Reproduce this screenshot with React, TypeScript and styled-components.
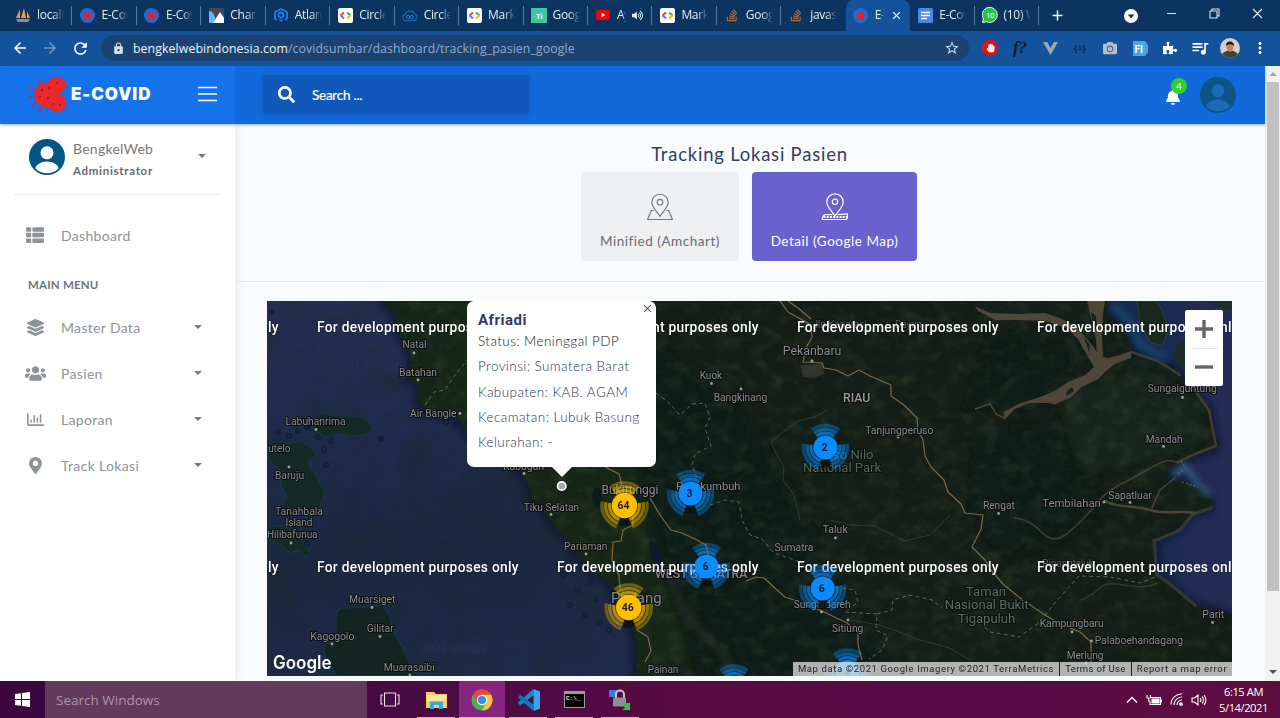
import React from "react";
import styled, { createGlobalStyle, css } from "styled-components";
import {
  FaSearch,
  FaBell,
  FaThList,
  FaLayerGroup,
  FaUsers,
  FaRegChartBar,
  FaMapMarkerAlt,
  FaPuzzlePiece,
  FaCamera,
  FaHandPaper,
  FaVolumeUp,
  FaStackOverflow,
} from "react-icons/fa";
import { MdLock, MdRefresh, MdArrowBack, MdArrowForward, MdStarBorder, MdQueueMusic, MdMoreVert, MdAdd, MdClose } from "react-icons/md";

const UI = `"Open Sans", "Noto Sans", sans-serif`;
const LATO = `Lato, sans-serif`;
const ROBOTO = `Roboto, sans-serif`;

const Global = createGlobalStyle`
  *, *::before, *::after { box-sizing: border-box; }
  body { margin: 0; overflow: hidden; background: #f9fbfd; }
  svg { display: block; flex: none; }
`;

const Desktop = styled.div`
  width: 1280px;
  height: 718px;
  display: flex;
  flex-direction: column;
  overflow: hidden;
  font-family: ${UI};
`;

/* ---------- browser chrome ---------- */

const TabStrip = styled.div`
  height: 31px;
  flex: none;
  display: flex;
  align-items: stretch;
  padding-left: 8px;
  background: #0b3560;
`;

const Tab = styled.div<{ $active?: boolean; $divider?: boolean }>`
  position: relative;
  width: 64.45px;
  flex: none;
  display: flex;
  align-items: center;
  padding: 0 7px 1px 7px;
  gap: 6px;
  color: #e4edf6;
  font-size: 12px;
  letter-spacing: -0.3px;
  ${(p) =>
    p.$active &&
    css`
      background: #14539b;
      border-radius: 8px 8px 0 0;
    `}
  ${(p) =>
    p.$divider &&
    css`
      &::after {
        content: "";
        position: absolute;
        right: 0;
        top: 6px;
        width: 1px;
        height: 19px;
        background: #5c7897;
      }
    `}
`;

const TabTitle = styled.span<{ $short?: boolean }>`
  width: ${(p) => (p.$short ? "9px" : "27px")};
  overflow: hidden;
  white-space: nowrap;
  line-height: 18px;
  mask-image: linear-gradient(to right, #000 60%, transparent);
`;

const Favicon = styled.span`
  width: 16px;
  height: 16px;
  flex: none;
  display: grid;
  place-items: center;
`;

const WindowBar = styled.div`
  flex: 1;
  display: flex;
  align-items: center;
  color: #fff;
`;

const WinSlot = styled.div<{ $w: number }>`
  width: ${(p) => p.$w}px;
  flex: none;
  height: 29px;
  display: grid;
  place-items: center;
`;

const WinButtons = styled.div`
  margin-left: -19px;
  height: 25px;
`;

const Toolbar = styled.div`
  height: 35px;
  flex: none;
  display: flex;
  align-items: center;
  padding-bottom: 1px;
  background: #14539b;
  color: #fff;
`;

const NavButtons = styled.div`
  width: 101px;
  display: flex;
  align-items: center;
  gap: 12px;
  padding-left: 11px;
`;

const Omnibox = styled.div`
  width: 868px;
  height: 26px;
  border-radius: 13px;
  background: #1a4372;
  display: flex;
  align-items: center;
  padding: 0 9px 0 11px;
  gap: 8px;
  font-size: 12.3px;
  color: #f0f5fa;
`;

const Url = styled.span`
  flex: 1;
  white-space: nowrap;
  letter-spacing: 0.095px;
  em {
    font-style: normal;
    color: #93aac5;
  }
`;

const Extensions = styled.div`
  flex: 1;
  display: flex;
  align-items: center;
  padding-left: 6px;
`;

const Ext = styled.div`
  width: 30px;
  height: 30px;
  display: grid;
  place-items: center;
`;

const FontExt = styled.span`
  font: italic bold 17px/20px "Liberation Serif", serif;
  color: #10192b;
`;

const BraceExt = styled.span`
  font: bold 9px/12px ${UI};
  color: #122444;
`;

/* ---------- page ---------- */

const Viewport = styled.div`
  height: 615px;
  flex: none;
  display: flex;
  background: #f9fbfd;
`;

const Page = styled.div`
  width: 1265px;
  display: flex;
  flex-direction: column;
  font-family: ${LATO};
`;

const Header = styled.header`
  height: 58px;
  flex: none;
  display: flex;
  background: #1269db;
  box-shadow: 0 1px 3px rgba(20, 90, 150, 0.45);
  z-index: 1;
`;

const Brand = styled.div`
  width: 235px;
  display: flex;
  align-items: center;
  padding: 0 18px 2px 28px;
  background: #1572e8;
`;

const BrandName = styled.span`
  flex: 1;
  color: #fff;
  font: 900 17px/24px Inter, sans-serif;
  letter-spacing: 0.85px;
`;

const SearchBox = styled.div`
  width: 266px;
  height: 39px;
  margin: 9px 0 0 28px;
  border-radius: 4px;
  background: #1059bb;
  box-shadow: 0 1px 5px rgba(10, 60, 140, 0.35);
  color: #fff;
  display: flex;
  align-items: center;
  gap: 17px;
  padding: 0 0 1px 15px;
  font-size: 13.5px;
  letter-spacing: -0.25px;
  -webkit-text-stroke: 0.2px #fff;
`;

const SearchText = styled.span`
  padding-top: 2px;
`;

const HeaderRight = styled.div`
  flex: 1;
  display: flex;
  justify-content: flex-end;
  align-items: center;
  gap: 19px;
  padding-right: 29px;
`;

const BellWrap = styled.div`
  position: relative;
  color: #fff;
  padding-top: 3px;
`;

const Badge = styled.span`
  position: absolute;
  left: 6px;
  top: -8px;
  width: 16px;
  height: 16px;
  border-radius: 50%;
  background: #31ce36;
  color: #fff;
  font-size: 10px;
  line-height: 16px;
  text-align: center;
`;

const Body = styled.div`
  flex: 1;
  min-height: 0;
  display: flex;
`;

const Sidebar = styled.aside`
  width: 235px;
  flex: none;
  background: #fff;
  box-shadow: 2px 0 9px rgba(60, 70, 100, 0.09);
`;

const Profile = styled.div`
  height: 71px;
  margin: 0 15px 0 14px;
  border-bottom: 1px solid #e9eaec;
  display: flex;
  padding: 15px 14px 0 15px;
  gap: 8px;
`;

const ProfileText = styled.div`
  flex: 1;
  color: #777;
  font-size: 14px;
  line-height: 22px;
  letter-spacing: 0.25px;
  margin-top: -1px;
  strong {
    display: block;
    font-size: 11.5px;
    color: #666a6c;
    letter-spacing: 0.7px;
  }
`;

const Caret = styled.i`
  margin-top: 15px;
  width: 0;
  height: 0;
  border: 4px solid transparent;
  border-top-color: #777a7d;
  border-bottom: 0;
`;

const NavItem = styled.div<{ $first?: boolean }>`
  height: 46px;
  display: flex;
  align-items: center;
  margin-top: ${(p) => (p.$first ? "18px" : "0")};
  padding: 0 33px 2px 25px;
  color: #8d9498;
  ${Caret} {
    margin-top: 0;
  }
`;

const NavIcon = styled.span`
  width: 20px;
  display: grid;
  place-items: center;
  margin-right: 16px;
`;

const NavLabel = styled.span`
  flex: 1;
  font-size: 14px;
  letter-spacing: 0.33px;
  padding-top: 1px;
`;

const SectionTitle = styled.h4`
  margin: 0;
  padding: 18px 0 12px 28px;
  font-size: 11.5px;
  line-height: 16px;
  letter-spacing: 0.2px;
  color: #6f7477;
`;

const Main = styled.main`
  flex: 1;
  min-width: 0;
  display: flex;
  flex-direction: column;
`;

const Intro = styled.section`
  height: 158px;
  flex: none;
  border-bottom: 1px solid #e6e9ec;
  display: flex;
  flex-direction: column;
  align-items: center;
  padding: 18px 2px 0 0;
`;

const Title = styled.h1`
  margin: 0 0 6px 1px;
  font-size: 18.5px;
  font-weight: 400;
  line-height: 24px;
  letter-spacing: 0.77px;
  color: #373c62;
`;

const Choices = styled.div`
  display: flex;
  gap: 13px;
`;

const Choice = styled.button<{ $primary?: boolean }>`
  width: ${(p) => (p.$primary ? "165px" : "158px")};
  height: 89px;
  border: 0;
  padding: 20px 0 0;
  border-radius: 4px;
  background: ${(p) => (p.$primary ? "#6861ce" : "#eff0f1")};
  color: ${(p) => (p.$primary ? "#fff" : "#686d72")};
  display: flex;
  flex-direction: column;
  align-items: center;
  gap: 9px;
  font: 400 13.5px/22px Lato, sans-serif;
  letter-spacing: 0.53px;
`;

const MapFrame = styled.div`
  position: relative;
  width: 965px;
  height: 375px;
  margin: 19px 0 0 32px;
  overflow: hidden;
  background: #1d2745;
  font-family: ${ROBOTO};
`;

const InfoWindow = styled.div`
  position: absolute;
  left: 200px;
  top: 0;
  width: 189px;
  height: 166px;
  border-radius: 7px;
  background: #fff;
  padding: 9px 0 0 11px;
  &::after {
    content: "";
    position: absolute;
    left: 84px;
    top: 165px;
    border: 11px solid transparent;
    border-top: 11px solid #fff;
    border-bottom: 0;
  }
`;

const InfoClose = styled.span`
  position: absolute;
  right: 2px;
  top: 1px;
  color: #555;
`;

const InfoName = styled.div`
  font: 700 15px/20px ${ROBOTO};
  letter-spacing: 0.5px;
  color: #343a66;
`;

const InfoLine = styled.div<{ $dark?: boolean }>`
  font: 300 13.5px/25.3px Lato, sans-serif;
  letter-spacing: 0.42px;
  white-space: nowrap;
  color: ${(p) => (p.$dark ? "#15161c" : "#2b3152")};
  margin-top: ${(p) => (p.$dark ? "-1px" : "0")};
`;

const ZoomControl = styled.div`
  position: absolute;
  right: 9px;
  top: 9px;
  width: 38px;
  height: 76px;
  border-radius: 2px;
  background: #fff;
  display: flex;
  flex-direction: column;
  align-items: center;
`;

const ZoomButton = styled.div`
  width: 27px;
  flex: 1;
  display: grid;
  place-items: center;
  & + & {
    border-top: 1px solid #e6e6e6;
  }
`;

const Attribution = styled.div`
  position: absolute;
  right: 0;
  bottom: 0;
  width: 439px;
  height: 14px;
  display: flex;
  background: rgba(225, 228, 226, 0.76);
  font: 400 9.5px/14px ${ROBOTO};
  color: #222;
  span {
    text-align: center;
    white-space: nowrap;
  }
  span + span {
    border-left: 1px solid #222;
  }
  span:nth-child(1) { width: 266px; letter-spacing: 0.61px; }
  span:nth-child(2) { width: 72px; letter-spacing: 0.35px; }
  span:nth-child(3) { width: 101px; letter-spacing: 0.62px; }
`;

const Scrollbar = styled.div`
  width: 15px;
  background: #f1f1f1;
  display: flex;
  flex-direction: column;
  align-items: center;
  justify-content: space-between;
  padding: 6px 0 7px;
`;

const Arrow = styled.i<{ $up?: boolean }>`
  border: 4px solid transparent;
  ${(p) => (p.$up ? "border-bottom-color: #a3a3a3; border-top: 0;" : "border-top-color: #505050; border-bottom: 0;")}
`;

const Thumb = styled.div`
  width: 12px;
  height: 509px;
  margin: 6px 0 auto 1px;
  background: #c1c1c1;
`;

/* ---------- taskbar ---------- */

const Taskbar = styled.footer`
  height: 37px;
  flex: none;
  display: flex;
  background: linear-gradient(90deg, #3f073f 0%, #490a42 30%, #570c42 55%, #560b46 75%, #5e0c3f 100%);
  color: #fff;
`;

const Start = styled.div`
  width: 45px;
  display: grid;
  place-items: center;
  background: #3c063f;
`;

const TaskSearch = styled.div`
  width: 322px;
  background: #623a5e;
  color: #ae94ac;
  font-size: 13.5px;
  line-height: 39px;
  padding-left: 11px;
`;

const TaskButton = styled.div<{ $open?: boolean; $active?: boolean }>`
  width: 46px;
  flex: none;
  display: grid;
  place-items: center;
  background: ${(p) => (p.$active ? "#86257f" : "transparent")};
  background-image: ${(p) => (p.$open ? "linear-gradient(#e8a3e0, #e8a3e0)" : "none")};
  background-repeat: no-repeat;
  background-size: ${(p) => (p.$active ? "100% 1px" : "38px 1px")};
  background-position: center bottom;
`;

const Tray = styled.div`
  margin-left: auto;
  display: flex;
  align-items: center;
  gap: 8px;
`;

const Clock = styled.div`
  width: 57px;
  margin-right: 8px;
  font-size: 11.2px;
  line-height: 16px;
  letter-spacing: -0.45px;
  text-align: center;
`;

/* ---------- small drawings ---------- */

const VirusIcon = ({ size = 15 }: { size?: number }) => (
  <svg width={size} height={size} viewBox="0 0 16 16">
    <circle cx="8" cy="8" r="8" fill="#2468cf" />
    <path d="M3.500 7.500 6 5l5-.8 1 1.600L10 8l2.500 2.400-.8 1.700-5-.5L3.500 9.700Z" fill="#e3202c" />
  </svg>
);

const Brackets = () => (
  <svg width="15" height="15" viewBox="0 0 15 15">
    <rect width="15" height="15" rx="2" fill="#fff" />
    <g fill="none" strokeWidth="2">
      <path d="M6 4.500 2.500 7.500" stroke="#ea4335" />
      <path d="M2.500 7.300 6 10.500" stroke="#4285f4" />
      <path d="M9 4.500 12.500 7.500" stroke="#34a853" />
      <path d="M12.500 7.300 9 10.500" stroke="#fbbc05" />
    </g>
  </svg>
);

const favicons: Record<string, React.ReactNode> = {
  pma: (
    <svg width="16" height="15" viewBox="0 0 16 15">
      <path d="M5 1 1 10h4ZM9 0 6 10h5ZM12 3v7h3Z" fill="#f29b38" />
      <path d="M1 11h14l-2 3H3Z" fill="#8b8f94" />
    </svg>
  ),
  virus: <VirusIcon />,
  am: (
    <svg width="15" height="15" viewBox="0 0 15 15">
      <rect width="15" height="15" rx="1" fill="#474758" />
      <path d="M0 3c4 0 6 4 7 12H0Z" fill="#67b7f0" />
      <path d="M4 15 11 4l4 6v5Z" fill="#fff" />
    </svg>
  ),
  atlantis: (
    <svg width="14" height="15" viewBox="0 0 14 15">
      <path d="M3 12 1 10.500V4l6-3 6 3v6.500L11 12" fill="none" stroke="#1f7af0" strokeWidth="1.800" />
      <circle cx="7" cy="7" r="2.500" fill="none" stroke="#1f7af0" strokeWidth="1.800" />
      <path d="M4.500 11.500 7 14l2.500-2.500" fill="#1f7af0" />
    </svg>
  ),
  code: <Brackets />,
  cloud: (
    <svg width="16" height="14" viewBox="0 0 16 14">
      <path d="M4 12.500a3 3 0 0 1-.6-6 4.700 4.700 0 0 1 9-.6 3.400 3.400 0 0 1-.4 6.600Z" fill="none" stroke="#1a62ad" strokeWidth="1.300" />
      <circle cx="6.200" cy="9" r="1.600" fill="none" stroke="#2a7fd6" />
      <circle cx="9.800" cy="9" r="1.600" fill="none" stroke="#2a7fd6" />
    </svg>
  ),
  ti: (
    <svg width="16" height="15" viewBox="0 0 16 15">
      <rect width="16" height="15" fill="#3fc5a1" />
      <text x="8" y="11" fontSize="8" fontWeight="700" fill="#e6fff7" textAnchor="middle" fontFamily="Roboto, sans-serif">Ti</text>
    </svg>
  ),
  yt: (
    <svg width="14" height="10" viewBox="0 0 15 11">
      <rect width="15" height="11" rx="2.500" fill="#f00" />
      <path d="M6 3v5l4-2.500Z" fill="#fff" />
    </svg>
  ),
  so: <FaStackOverflow size={14} color="#b5703a" />,
  docs: (
    <svg width="15" height="15" viewBox="0 0 15 15">
      <rect width="15" height="15" rx="1.500" fill="#4a86ee" />
      <path d="M3 4.500h9M3 7.500h9M3 10.500h6" stroke="#fff" strokeWidth="1.500" />
    </svg>
  ),
  wa: (
    <svg width="16" height="16" viewBox="0 0 16 16">
      <path d="M.5 15.500 1.400 12A7.500 7.500 0 1 1 4.500 14.700Z" fill="#25c04a" stroke="#e8fff0" strokeWidth="1" />
      <text x="8" y="11" fontSize="8" fill="#fff" textAnchor="middle" fontFamily="Roboto, sans-serif">10</text>
    </svg>
  ),
};

const tabs: { icon: string; title: string; divider?: boolean; active?: boolean; sound?: boolean }[] = [
  { icon: "pma", title: "localhost", divider: true },
  { icon: "virus", title: "E-Covid", divider: true },
  { icon: "virus", title: "E-Covid", divider: true },
  { icon: "am", title: "Charts", divider: true },
  { icon: "atlantis", title: "Atlantis", divider: true },
  { icon: "code", title: "Circles", divider: true },
  { icon: "cloud", title: "Circles", divider: true },
  { icon: "code", title: "Marker", divider: true },
  { icon: "ti", title: "Google", divider: true },
  { icon: "yt", title: "Ay", divider: true, sound: true },
  { icon: "code", title: "Marker", divider: true },
  { icon: "so", title: "Google", divider: true },
  { icon: "so", title: "javascript" },
  { icon: "virus", title: "E-Covid", active: true },
  { icon: "docs", title: "E-Covid", divider: true },
  { icon: "wa", title: "(10) Wh", divider: true },
];

const Avatar = ({ id, color, fill }: { id: string; color: string; fill: string }) => (
  <svg width="36" height="36" viewBox="0 0 36 36">
    <clipPath id={id}>
      <circle cx="18" cy="18" r="16.300" />
    </clipPath>
    <circle cx="18" cy="18" r="18" fill={color} />
    <g clipPath={`url(#${id})`} fill={fill}>
      <circle cx="18" cy="13.800" r="6.500" />
      <ellipse cx="18" cy="31" rx="12" ry="8.500" />
    </g>
  </svg>
);

const BrandVirus = () => (
  <svg width="43" height="42" viewBox="0 0 43 42">
    <g stroke="#b8305a" strokeWidth="1.100">
      <path d="M14 12 11 7M8 18 3 15M7 24H2M9 29 4 32M15 32l-3 5M20 34l-1 4M25 8 23 3M31 5V2M36 8l2-2M38 14h2M36 30l4 1M35 35l3 3M30 37v3" />
    </g>
    <g fill="#c02c4e">
      <circle cx="11" cy="7" r="1.200" /><circle cx="3" cy="15" r="1.200" /><circle cx="2" cy="24" r="1.200" />
      <circle cx="4" cy="32" r="1.200" /><circle cx="12" cy="37" r="1.200" />
    </g>
    <path
      d="M20 9.500C22 5 27 3 32 4.500S39 11 37 15 33 19.500 31 21C33 22.500 36 23 38 27S36 37 31 38.500 23 38 20 34C13 35 6.500 29 6.500 22S12 9 20 9.500Z"
      fill="#e9282b"
    />
    <g fill="#a91a22">
      <circle cx="14" cy="17" r="1.300" /><circle cx="20" cy="25" r="1.300" /><circle cx="12" cy="24" r="1" />
      <circle cx="21" cy="15" r="1" /><circle cx="29" cy="10" r="1.100" /><circle cx="32" cy="32" r="1.100" />
      <circle cx="25" cy="31" r="1" />
    </g>
  </svg>
);

const PinMapIcon = () => (
  <svg width="28" height="29" viewBox="0 0 28 29" fill="none" stroke="#74787c" strokeWidth="1.100">
    <path d="M14 24.500C11 19.500 5.800 15 5.800 10.500a8.200 8.200 0 0 1 16.400 0c0 4.500-5.200 9-8.200 14Z" />
    <circle cx="14" cy="10.200" r="2.800" />
    <path d="M7.500 18.500H5.300L1.500 27.500h25l-3.800-9h-2.200" />
  </svg>
);

const PinRoadIcon = () => (
  <svg width="28" height="29" viewBox="0 0 28 29" fill="none" stroke="#fff" strokeWidth="1.200">
    <path d="M14 24C11 19.500 5.800 14.800 5.800 10a8.200 8.200 0 0 1 16.400 0C22.200 14.800 17 19.500 14 24Z" />
    <circle cx="14" cy="9.800" r="2.700" />
    <path d="M1 27.500 2.500 23.500c1-1 2-.8 3-.8h6M1 27.500h24.500c1-1.500 1-3.500 1-5.500l-10 .7" />
    <path d="M2.500 25h23.500" strokeWidth="2" strokeDasharray="2 1.200" />
  </svg>
);

/* ---------- map ---------- */

type Label = { t: string; x: number; y: number; w: number; s?: number; c?: string; b?: boolean; o?: number };

const labels: Label[] = [
  { t: "Natal", x: 402.5, y: 347.700, w: 24 },
  { t: "Batahan", x: 399, y: 375.700, w: 38 },
  { t: "Air Bangle", x: 410, y: 417, w: 46.500 },
  { t: "Labuhanrima", x: 285.500, y: 424.700, w: 60 },
  { t: "utelo", x: 268, y: 451.500, w: 22.500 },
  { t: "Baruju", x: 275, y: 478.700, w: 29 },
  { t: "Tanahbala", x: 275, y: 515, w: 48 },
  { t: "Island", x: 285.500, y: 525.600, w: 27 },
  { t: "Hilibafunua", x: 267, y: 537.500, w: 50.500 },
  { t: "Muarsiget", x: 349, y: 602.500, w: 46.500 },
  { t: "Gilitar", x: 366.700, y: 631.500, w: 27 },
  { t: "Kagogolo", x: 310.300, y: 640, w: 44 },
  { t: "Muarasaibi", x: 383.700, y: 670.700, w: 51 },
  { t: "Tiku Selatan", x: 523.700, y: 510.700, w: 55.500 },
  { t: "Kabugan", x: 503, y: 470, w: 41 },
  { t: "Pariaman", x: 564, y: 549.800, w: 43.500 },
  { t: "Bukittinggi", x: 601.500, y: 493.500, w: 57, s: 12 },
  { t: "Payakumbuh", x: 676, y: 489.500, w: 64.500, s: 11.500 },
  { t: "Kuok", x: 699.700, y: 379, w: 22.500 },
  { t: "Bangkinang", x: 713.700, y: 400.500, w: 53.500 },
  { t: "Pekanbaru", x: 782.700, y: 355, w: 58.700, s: 12.500 },
  { t: "Jln Kaparasi", x: 812.700, y: 327.700, w: 54, o: 0.6 },
  { t: "Dayun", x: 895, y: 327.700, w: 27, o: 0.6 },
  { t: "RIAU", x: 843, y: 401.700, w: 27.300, s: 12, b: true, c: "#98999a" },
  { t: "Tanjungperuso", x: 865.300, y: 433.500, w: 68 },
  { t: "Teso Nilo", x: 819, y: 458.500, w: 54.500, s: 12.500, c: "#4e6a55" },
  { t: "National Park", x: 803, y: 471.700, w: 78, s: 12.500, c: "#4e6a55" },
  { t: "Sungaiguntung", x: 1147.700, y: 392.300, w: 69 },
  { t: "Mandah", x: 1145.700, y: 442.500, w: 37 },
  { t: "Sapatluar", x: 1108.300, y: 498.500, w: 43.500 },
  { t: "Tembilahan", x: 1042.300, y: 506.500, w: 58.500, s: 11.500 },
  { t: "Rengat", x: 983, y: 508.800, w: 31.700 },
  { t: "Taluk", x: 822.700, y: 533, w: 25 },
  { t: "Sumatra", x: 774.500, y: 551, w: 39 },
  { t: "WEST SUMATRA", x: 655, y: 578, w: 92.500, s: 12, b: true, c: "#84878a" },
  { t: "Padang", x: 611, y: 602.500, w: 50.500, s: 15.500, c: "#8a8a8c" },
  { t: "Sungaidareh", x: 793.700, y: 608.300, w: 57 },
  { t: "Sitiung", x: 832, y: 631.700, w: 31.300 },
  { t: "Painan", x: 647.700, y: 673, w: 30.700 },
  { t: "Taman", x: 966, y: 596, w: 40, s: 12.500, c: "#5a6f60" },
  { t: "Nasional Bukit", x: 944.700, y: 609.200, w: 84, s: 12.500, c: "#5a6f60" },
  { t: "Tigapuluh", x: 957.700, y: 622.500, w: 57.500, s: 12.500, c: "#5a6f60" },
  { t: "Kampungbaru", x: 1039.700, y: 627, w: 64 },
  { t: "Palaboehandagang", x: 1094.700, y: 643.800, w: 88.300 },
  { t: "Merlung", x: 1066.700, y: 659, w: 36.700 },
  { t: "Parit", x: 1202.300, y: 617.700, w: 22 },
  { t: "Pinangteluk", x: 1042.300, y: 566.500, w: 51.500, o: 0.6 },
];

const towns: [number, number][] = [
  [414, 353], [418, 380], [460, 413.500], [316, 429.500], [289, 467], [291, 543], [372, 607.500], [380, 636.500],
  [332, 644], [410, 675], [551, 514.500], [524, 473.500], [586, 554], [711.500, 383.500], [741, 389], [812, 361],
  [898, 437], [1182.500, 397.500], [1163.500, 446.500], [1130, 502.500], [1104, 502], [998.500, 513.500], [835.500, 538],
  [821.500, 612], [848, 620], [1072, 632], [1091.500, 641], [1212.500, 622.500], [1086, 663],
];

const clusters: { x: number; y: number; n: string; warm?: boolean }[] = [
  { x: 624.500, y: 505.500, n: "64", warm: true },
  { x: 690.500, y: 493.500, n: "3" },
  { x: 825.500, y: 447.500, n: "2" },
  { x: 706.500, y: 566.500, n: "6" },
  { x: 628.700, y: 607.500, n: "46", warm: true },
  { x: 822.700, y: 588.500, n: "6" },
  { x: 734, y: 688, n: "3" },
  { x: 847.500, y: 672, n: "4" },
];

const arc = (r: number, from: number, to: number) => {
  const p = (a: number) => `${(r * Math.sin((a * Math.PI) / 180)).toFixed(2)} ${(-r * Math.cos((a * Math.PI) / 180)).toFixed(2)}`;
  return `M${p(from)}A${r} ${r} 0 0 1 ${p(to)}`;
};

const sectors = (r: number) => arc(r, -38, 38) + arc(r, 80, 160) + arc(r, 200, 280);

const Cluster = ({ x, y, n, warm }: { x: number; y: number; n: string; warm?: boolean }) => {
  const color = warm ? "#ffbf00" : "#0a8cff";
  const rings: [number, number][] = warm ? [[15, 0.6], [19, 0.42], [23, 0.22]] : [[14.500, 0.6], [18.200, 0.42], [22, 0.22]];
  return (
    <g transform={`translate(${x} ${y})`} fill="none">
      <path d={sectors(18)} stroke={color} strokeWidth={12} opacity={0.2} />
      {rings.map(([r, o]) => (
        <path key={r} d={sectors(r)} stroke={color} strokeWidth={2.800} opacity={o} />
      ))}
      <path d="M-3 10h6l2 10h-10Z" fill="#0d1210" opacity={0.85} />
      <circle r={warm ? 12.700 : 12} fill={color} />
      <text x="-1" y="3.800" textAnchor="middle" fontSize="10.500" fontWeight="700" fill="#1a1d22">
        {n}
      </text>
    </g>
  );
};

const mainland =
  "M384 301 395 315 400 335 409 345 411 365 408 378 420 387 417 400 427 411 440 415 458 417 472 438 500 458 522 471 529 485 530 498 544 510 552 523 570 541 577 555 590 568 607 580 617 596 619 610 631 625 637 645 637 676H1232V614L1208 609 1190 603 1172 588 1164 580 1157 575 1154 552 1153 540 1168 535 1181 526 1192 514 1210 509 1212 503 1200 489 1180 480 1164 479 1178 463 1195 455 1213 451 1216 447 1209 410 1195 391 1182 382 1178 370 1160 363 1145 356 1131 352 1128 338 1116 320 1104 314 1110 301Z";

const dev = "For development purposes only";

const MapDrawing = () => (
  <svg width="965" height="375" viewBox="267 301 965 375" fontFamily={ROBOTO}>
    <defs>
      <linearGradient id="sea" x1="0" y1="0" x2="0.3" y2="1">
        <stop offset="0" stopColor="#252e52" />
        <stop offset="0.4" stopColor="#202a4b" />
        <stop offset="0.65" stopColor="#1c2741" />
        <stop offset="1" stopColor="#1f2b4a" />
      </linearGradient>
      <linearGradient id="east" x1="0" y1="0" x2="1" y2="0">
        <stop offset="0" stopColor="#14304c" />
        <stop offset="0.5" stopColor="#182a50" />
        <stop offset="0.8" stopColor="#232b55" />
        <stop offset="1" stopColor="#252d55" />
      </linearGradient>
      <filter id="relief" x="0" y="0" width="1" height="1">
        <feTurbulence type="fractalNoise" baseFrequency="0.06 0.08" numOctaves="5" seed="8" />
        <feColorMatrix values="0 0 0 0 0.12  0 0 0 0 0.18  0 0 0 0 0.08  2.2 0 0 0 -0.95" />
      </filter>
      <filter id="shade" x="0" y="0" width="1" height="1">
        <feTurbulence type="fractalNoise" baseFrequency="0.03 0.04" numOctaves="4" seed="3" />
        <feColorMatrix values="0 0 0 0 0.01  0 0 0 0 0.02  0 0 0 0 0.02  2.4 0 0 0 -1.0" />
      </filter>
      <filter id="soft" x="-20%" y="-20%" width="140%" height="140%">
        <feGaussianBlur stdDeviation="3" />
      </filter>
      <filter id="silt" x="-5%" y="-5%" width="110%" height="110%">
        <feGaussianBlur stdDeviation="0.7" />
      </filter>
      <clipPath id="land">
        <path d={mainland} />
      </clipPath>
    </defs>

    <rect x="267" y="301" width="965" height="375" fill="url(#sea)" />
    <rect x="1085" y="301" width="147" height="375" fill="url(#east)" />
    <rect x="267" y="301" width="400" height="375" filter="url(#shade)" opacity="0.35" />

    <path d={mainland} fill="none" stroke="#0e1828" strokeWidth="8" filter="url(#soft)" opacity="0.8" />
    <path d={mainland} fill="#131e16" />
    <g clipPath="url(#land)">
      <path d="M384 301H470L640 400 680 500 690 676H630L520 480 400 400Z" fill="#182617" filter="url(#soft)" />
      <path d="M640 330 760 430 830 560 900 676H700L640 500Z" fill="#111c15" filter="url(#soft)" />
      <path d="M975 430 1080 420 1110 520 1010 560 970 520Z" fill="#0f1a12" filter="url(#soft)" />
      <path d="M990 330 1080 350 1060 400 960 420Z" fill="#101c13" filter="url(#soft)" />
      <path d="M1060 400 1140 370 1200 400 1205 440 1150 460 1080 470Z" fill="#19281a" filter="url(#soft)" />
      <rect x="380" y="301" width="852" height="375" filter="url(#relief)" opacity="0.2" />
      <rect x="380" y="301" width="852" height="375" filter="url(#shade)" opacity="0.35" />
      <path d="M668 560 675 590 690 620 720 650 735 676" fill="none" stroke="#2c332c" strokeWidth="7" opacity="0.6" filter="url(#soft)" />
      <path d="M649 540 657 545 664 565 657 568 650 555Z" fill="#0e1a2b" />
      <ellipse cx="597" cy="497" rx="5" ry="10" fill="#0d1a20" />
      <path d="M800 365 822 364 824 373 815 378 803 377Z" fill="#484b45" opacity="0.5" filter="url(#silt)" />
    </g>

    <g fill="none" stroke="#4b4438" strokeLinecap="round">
      <path d="M1157 583C1140 592 1120 582 1108 584S1100 594 1080 600" strokeWidth="1.500" opacity="0.6" />
      <path d="M1178 463C1165 455 1150 470 1125 482S1100 502 1085 517 1060 542 1050 538 1035 520 1015 518" strokeWidth="1.500" opacity="0.85" />
      <path d="M1195 513C1180 510 1165 515 1150 510S1115 508 1105 501" strokeWidth="2.500" />
      <path d="M1152 508 1160 490 1175 478" strokeWidth="1.500" />
      <path d="M1154 540 1157 575 1170 584 1195 605" strokeWidth="3.500" opacity="0.6" />
      <path d="M1157 540 1180 530 1193 514 1211 508" strokeWidth="3.500" opacity="0.6" />
      <path d="M1131 352 1158 361 1180 375M1196 392 1209 410 1216 446 1195 454 1178 462" strokeWidth="2.500" opacity="0.8" />
    </g>
    <g filter="url(#silt)">
      <path
        d="M975 306 990 313 1020 314 1045 313 1062 319 1076 327 1088 340 1097 352 1096 340 1092 322 1087 301H1105L1103 315 1102 335 1103 357 1108 358 1120 355 1131 351 1131 358 1115 364 1105 372 1098 379 1082 387 1070 398 1057 403 1048 403 1030 403 1015 409 1007 417 1004 420 1004 412 1018 404 1040 397 1055 391 1068 382 1085 375 1094 367 1088 357 1078 339 1066 328 1045 321 1020 320 995 320 978 311Z"
        fill="#4f4437"
      />
      <path d="M1045 401 1055 404 1068 397M1004 418 996 414 990 404 975 409" fill="none" stroke="#4b4438" strokeWidth="1.500" />
    </g>
    <path d="M1067 391 1072 387 1074 391 1066 396ZM1091 312 1096 316 1097 330 1093 328ZM1084 337 1090 345 1089 352Z" fill="#17231a" />

    <g opacity="0.7">
      <path d="M1110 303 1128 320 1140 345 1158 355 1168 358" fill="none" stroke="#1c4a72" strokeWidth="9" filter="url(#soft)" />
      <path d="M1173 476 1184 466 1198 484 1210 495" fill="none" stroke="#3d7590" strokeWidth="6" filter="url(#soft)" />
      <path d="M1181 461 1186 468M1178 474 1183 470M1182 482 1198 487" stroke="#7f98aa" strokeWidth="1.200" strokeDasharray="2 2" opacity="0.7" />
    </g>
    <path d="M1137 301 1140 325 1150 342 1162 346 1169 330 1161 308 1155 301Z" fill="#19291f" stroke="#353f37" />
    <path d="M1172 353 1183 340 1190 365 1182 370Z M1205 301 1215 306 1232 310V301Z" fill="#1c2d29" />

    <g fill="#172927" stroke="#173541" strokeWidth="1.500">
      <path d="M314 419 320 413 330 415 345 416 362 416 370 423 372 430 365 435 348 436 340 433 325 437 315 430Z" />
      <path d="M267 448 276 440 288 444 300 441 312 448 316 456 308 463 316 475 325 493 320 506 312 522 300 512 289 520 282 508 287 497 280 484 282 472 270 462Z" />
      <path d="M267 528 281 525 296 531 302 541 310 552 306 558 299 550 290 553 280 544 267 539Z" />
      <path d="M336 613 341 608 362 607 383 605 390 617 393 632 402 646 410 664 416 676H337L325 657 324 647 336 636Z" fill="#142521" />
    </g>
    <g fill="#13283a">
      {[[278, 432], [289, 436], [298, 431], [307, 427], [318, 437], [331, 441], [381, 439], [324, 450], [326, 465], [272, 312], [307, 544], [446, 422], [456, 425], [563, 575], [578, 590], [590, 582], [596, 600], [570, 605], [585, 615], [599, 622], [609, 630]].map(([x, y]) => (
        <circle key={`${x}-${y}`} cx={x} cy={y} r="2.500" stroke="#0f1e35" />
      ))}
    </g>

    <g fill="none" stroke="#8d714a" strokeWidth="1.200" strokeLinejoin="round" opacity="0.9">
      <path d="M780 301 788 312 797 317 811 325 812 337 806 348 803 362 822 363 824 368 836 370 848 376 859 370 870 376 891 385 891 396 904 405 917 418 918 430 923 440 925 456 931 467 944 480 948 492 961 504 965 513 983 515 981 529 972 547 985 560 991 570 1003 584 1020 598 1045 615 1060 624 1080 632 1091 642 1091 662" />
      <path d="M788 301 798 308 811 319M605 467 619 474 622 485 622 495M650 498 660 515 671 530 682 533 697 540 706 545 710 562" />
      <path d="M633 515V525L623 530 621 541 613 542 612 560 619 575 620 590M637 630 648 637 651 651 645 662M746 581 756 577 764 578 776 589 785 597 800 602 822 611 847 623 858 633 858 645 862 660" />
    </g>
    <g fill="none" stroke="#8a958d" strokeWidth="1" strokeDasharray="4 3" opacity="0.6">
      <path d="M425 405 434 392 445 390 455 375 467 360M656 393 668 402 680 415 692 404 705 403 710 417 705 428 711 446 695 454 692 465 697 478M710 505 725 500 739 502 742 520 750 535 762 539 774 553 800 562 827 586 855 590 858 602 845 612 877 614 876 630 888 636 882 650 869 659M877 614 892 610 893 600 910 595 932 600 942 608M985 627 990 632 1019 637 1040 622 1053 605 1079 576 1110 577 1140 583 1155 577" />
    </g>
    <g fill="none" stroke="#4b5547" strokeWidth="1" opacity="0.5">
      <path d="M771 442 783 432 798 421 815 417 827 410M771 442 777 455 784 467 783 480 794 495 800 520M830 520 850 525 875 526 905 541 930 535 950 515M850 620 880 625 920 640 950 648 970 660" />
    </g>

    <g fill="#2a3556" opacity="0.6" fontSize="11.500" fontWeight="700">
      <text x="322" y="368">© 2021 Google</text>
      <text x="421" y="652">2021 Google</text>
    </g>

    {towns.map(([x, y]) => (
      <circle key={`${x}/${y}`} cx={x} cy={y} r="1.400" fill="#9ca0a0" />
    ))}
    {labels.map((l) => (
      <text
        key={l.t}
        x={l.x}
        y={l.y}
        textLength={l.w}
        lengthAdjust="spacingAndGlyphs"
        fontSize={l.s ?? 10.300}
        fontWeight={l.b ? 500 : 400}
        fill={l.c ?? "#8b8d8f"}
        stroke="#0b100f"
        strokeWidth="2"
        strokeLinejoin="round"
        paintOrder="stroke"
        opacity={l.o ?? 1}
      >
        {l.t}
      </text>
    ))}

    <g fill="#fff" fontSize="13.800" fontWeight="500">
      {[331.700, 571.700].map((y) =>
        [77, 317, 557, 797, 1037].map((x) => (
          <text key={`${x}${y}`} x={x} y={y} textLength="201.500" stroke="#000" strokeOpacity="0.35" strokeWidth="1" paintOrder="stroke">
            {dev}
          </text>
        ))
      )}
    </g>

    {clusters.map((c) => (
      <Cluster key={`${c.x}`} {...c} />
    ))}
    <circle cx="561.700" cy="486" r="4.200" fill="#a8a8a8" stroke="#fff" strokeWidth="1.700" />

    <text x="273" y="668.500" fontSize="18" fontWeight="600" fontFamily="Inter, sans-serif" fill="#fff" textLength="58.500" lengthAdjust="spacingAndGlyphs">
      Google
    </text>
  </svg>
);

const nav = [
  { icon: <FaLayerGroup size={17} />, label: "Master Data" },
  { icon: <FaUsers size={21} />, label: "Pasien" },
  { icon: <FaRegChartBar size={17} />, label: "Laporan" },
  { icon: <FaMapMarkerAlt size={17} />, label: "Track Lokasi" },
];

export default function App() {
  return (
    <>
      <Global />
      <Desktop>
        <TabStrip>
          {tabs.map((t, i) => (
            <Tab key={i} $active={t.active} $divider={t.divider}>
              <Favicon>{favicons[t.icon]}</Favicon>
              <TabTitle $short={t.active || t.sound}>{t.title}</TabTitle>
              {t.sound && <FaVolumeUp size={11} />}
              {t.active && <MdClose size={13} color="#fff" />}
            </Tab>
          ))}
          <WindowBar>
            <WinSlot $w={36}><MdAdd size={17} /></WinSlot>
            <WinSlot $w={111}>
              <svg width="14" height="14" viewBox="0 0 14 14">
                <circle cx="7" cy="7" r="7" fill="#fff" />
                <path d="M3.700 5.500h6.600L7 9.500Z" fill="#0b3560" />
              </svg>
            </WinSlot>
            <WinButtons>
              <svg width="98" height="25" viewBox="0 0 98 25" fill="none" stroke="#dce6f0" strokeWidth="1.100">
                <path d="M0 10.500h9M43 8h7v7h-7ZM45 8V6h7v7h-2M86 6l9 9M95 6l-9 9" />
              </svg>
            </WinButtons>
          </WindowBar>
        </TabStrip>
        <Toolbar>
          <NavButtons>
            <MdArrowBack size={18} />
            <MdArrowForward size={18} color="#6f97c4" />
            <MdRefresh size={19} />
          </NavButtons>
          <Omnibox>
            <MdLock size={13} color="#d5dfea" />
            <Url>
              bengkelwebindonesia.com<em>/covidsumbar/dashboard/tracking_pasien_google</em>
            </Url>
            <MdStarBorder size={16} color="#c8d5e4" />
          </Omnibox>
          <Extensions>
            <Ext>
              <svg width="16" height="16" viewBox="0 0 16 16">
                <path d="M5 0h6l5 5v6l-5 5H5l-5-5V5Z" fill="#d31920" />
                <FaHandPaper x={4} y={3.500} size={9} color="#fff" />
              </svg>
            </Ext>
            <Ext><FontExt>f?</FontExt></Ext>
            <Ext>
              <svg width="15" height="13" viewBox="0 0 15 13">
                <path d="M0 0h4l3.500 6L11 0h4L7.500 13Z" fill="#9da7b0" />
              </svg>
            </Ext>
            <Ext><BraceExt>{"{≡}"}</BraceExt></Ext>
            <Ext><FaCamera size={14} color="#b9bdc2" /></Ext>
            <Ext>
              <svg width="15" height="15" viewBox="0 0 15 15">
                <path d="M0 0h12l3 4v7l-3 4H0Z" fill="#4aa6dc" />
                <text x="1.500" y="11.500" fontSize="10" fontWeight="700" fill="#fff" fontFamily={ROBOTO}>FI</text>
              </svg>
            </Ext>
            <Ext><FaPuzzlePiece size={14} /></Ext>
            <Ext><MdQueueMusic size={20} /></Ext>
            <Ext>
              <svg width="20" height="20" viewBox="0 0 20 20">
                <clipPath id="me"><circle cx="10" cy="10" r="10" /></clipPath>
                <g clipPath="url(#me)">
                  <rect width="20" height="20" fill="#d5cfc8" />
                  <ellipse cx="10" cy="19" rx="9" ry="6.500" fill="#3d4434" />
                  <ellipse cx="10" cy="9" rx="3.500" ry="4.800" fill="#b98765" />
                  <path d="M6 8c-.5-6 8.500-6 8 0-1.500-2.500-6.500-2.500-8 0Z" fill="#1b1713" />
                </g>
              </svg>
            </Ext>
            <Ext><MdMoreVert size={18} /></Ext>
          </Extensions>
        </Toolbar>

        <Viewport>
          <Page>
            <Header>
              <Brand>
                <BrandVirus />
                <BrandName>E-COVID</BrandName>
                <svg width="19" height="16" viewBox="0 0 19 16" stroke="#fff" strokeWidth="1.500">
                  <path d="M0 1.500h19M0 8h19M0 14.500h19" />
                </svg>
              </Brand>
              <SearchBox>
                <FaSearch size={17} />
                <SearchText>Search ...</SearchText>
              </SearchBox>
              <HeaderRight>
                <BellWrap>
                  <FaBell size={16} />
                  <Badge>4</Badge>
                </BellWrap>
                <Avatar id="av-top" color="#0c5485" fill="#1a6ab5" />
              </HeaderRight>
            </Header>
            <Body>
              <Sidebar>
                <Profile>
                  <Avatar id="av-side" color="#045583" fill="#fff" />
                  <ProfileText>
                    BengkelWeb
                    <strong>Administrator</strong>
                  </ProfileText>
                  <Caret />
                </Profile>
                <NavItem $first>
                  <NavIcon><FaThList size={18} /></NavIcon>
                  <NavLabel>Dashboard</NavLabel>
                </NavItem>
                <SectionTitle>MAIN MENU</SectionTitle>
                {nav.map((n) => (
                  <NavItem key={n.label}>
                    <NavIcon>{n.icon}</NavIcon>
                    <NavLabel>{n.label}</NavLabel>
                    <Caret />
                  </NavItem>
                ))}
              </Sidebar>
              <Main>
                <Intro>
                  <Title>Tracking Lokasi Pasien</Title>
                  <Choices>
                    <Choice><PinMapIcon />Minified (Amchart)</Choice>
                    <Choice $primary><PinRoadIcon />Detail (Google Map)</Choice>
                  </Choices>
                </Intro>
                <MapFrame>
                  <MapDrawing />
                  <InfoWindow>
                    <InfoName>Afriadi</InfoName>
                    <InfoLine $dark>Status: Meninggal PDP</InfoLine>
                    <InfoLine>Provinsi: Sumatera Barat</InfoLine>
                    <InfoLine>Kabupaten: KAB. AGAM</InfoLine>
                    <InfoLine>Kecamatan: Lubuk Basung</InfoLine>
                    <InfoLine>Kelurahan: -</InfoLine>
                    <InfoClose><MdClose size={13} /></InfoClose>
                  </InfoWindow>
                  <ZoomControl>
                    <ZoomButton>
                      <svg width="18" height="18" viewBox="0 0 18 18" stroke="#666" strokeWidth="3.400"><path d="M0 9h18M9 0v18" /></svg>
                    </ZoomButton>
                    <ZoomButton>
                      <svg width="18" height="18" viewBox="0 0 18 18" stroke="#666" strokeWidth="3.400"><path d="M0 9h18" /></svg>
                    </ZoomButton>
                  </ZoomControl>
                  <Attribution>
                    <span>Map data ©2021 Google Imagery ©2021 TerraMetrics</span>
                    <span>Terms of Use</span>
                    <span>Report a map error</span>
                  </Attribution>
                </MapFrame>
              </Main>
            </Body>
          </Page>
          <Scrollbar>
            <Arrow $up />
            <Thumb />
            <Arrow />
          </Scrollbar>
        </Viewport>

        <Taskbar>
          <Start>
            <svg width="15" height="15" viewBox="0 0 15 15" fill="#fff">
              <path d="M0 2 6 1.200V7H0ZM7 1 15 0v7H7ZM0 8h6v5.800L0 13ZM7 8h8v7l-8-1Z" />
            </svg>
          </Start>
          <TaskSearch>Search Windows</TaskSearch>
          <TaskButton>
            <svg width="20" height="15" viewBox="0 0 20 15" fill="none" stroke="#efe4ee" strokeWidth="1.100">
              <path d="M4.500 1h11v13h-11ZM3 3H1v9h2M17 3h2v9h-2" />
            </svg>
          </TaskButton>
          <TaskButton $open>
            <svg width="21" height="18" viewBox="0 0 21 18">
              <path d="M0 1h8l2 2h11v14H0Z" fill="#f3cf66" />
              <path d="M1 4h19v6H1Z" fill="#fbe596" />
              <path d="M4 18V10.500h13V18h-4v-4H8v4Z" fill="#3ba9dc" />
            </svg>
          </TaskButton>
          <TaskButton $open $active>
            <svg width="22" height="22" viewBox="0 0 22 22">
              <circle cx="11" cy="11" r="10.500" fill="#4caf50" />
              <path d="M1.900 5.750A10.500 10.500 0 0 1 20.100 5.750H11L6.450 13.600Z" fill="#e8493a" />
              <path d="M20.100 5.750A10.500 10.500 0 0 1 11 21.500L15.550 13.600 11 5.750Z" fill="#fbc62f" />
              <circle cx="11" cy="11" r="5.200" fill="#fff" />
              <circle cx="11" cy="11" r="4.100" fill="#4285f4" />
            </svg>
          </TaskButton>
          <TaskButton $open>
            <svg width="23" height="22" viewBox="0 0 23 22">
              <path d="M16.500 0 23 2.500v17L16.500 22Z" fill="#35a7ee" />
              <path d="M16.500 0 1 13.500 3 16.500 17 6Z" fill="#1788d2" />
              <path d="M1 8.500 3 5.500 17 16 16.500 22Z" fill="#0f77be" />
            </svg>
          </TaskButton>
          <TaskButton $open>
            <svg width="21" height="17" viewBox="0 0 21 17">
              <rect width="21" height="17" fill="#9a9a9c" />
              <rect x="1" y="3" width="19" height="13" fill="#050505" />
              <text x="2" y="9" fontSize="6" fontWeight="700" fill="#eee" fontFamily="Liberation Mono, monospace">C:\_</text>
            </svg>
          </TaskButton>
          <TaskButton $open>
            <svg width="22" height="22" viewBox="0 0 22 22">
              <path d="M0 1h8v7H0Z" fill="#3b78e0" />
              <path d="M7 9V5.500a4 4 0 0 1 8 0V9" fill="none" stroke="#c6c8ca" strokeWidth="2" />
              <rect x="4" y="8.500" width="13" height="9" rx="1" fill="#8d9094" />
              <path d="M13 14h8v7h-8l3-2Z" fill="#35c03c" />
            </svg>
          </TaskButton>
          <Tray>
            <svg width="12" height="8" viewBox="0 0 12 8" fill="none" stroke="#fff" strokeWidth="1.300"><path d="M1 6.500 6 1.500l5 5" /></svg>
            <svg width="16" height="12" viewBox="0 0 16 12" fill="none" stroke="#fff" strokeWidth="1.100">
              <path d="M5 3.500h9.500v7H4V7M15.500 5.500v3M1 1v3h3.500V1M2.700 4v3H4" />
              <path d="M6 5h7v4H6Z" fill="#fff" />
            </svg>
            <svg width="13" height="13" viewBox="0 0 13 13" fill="none" stroke="#fff" strokeWidth="1.100">
              <path d="M1 11.500A10.500 10.500 0 0 1 12 1M4 12a8 8 0 0 1 8-8M7 12a5 5 0 0 1 5-5" /><circle cx="11" cy="11" r="1.300" fill="#fff" />
            </svg>
            <svg width="16" height="12" viewBox="0 0 16 12" fill="none" stroke="#fff" strokeWidth="1.100">
              <path d="M1 4h2.500L7 1v10L3.500 8H1ZM9 4a3 3 0 0 1 0 4M11 2.500a5 5 0 0 1 0 7M13 1a7.500 7.500 0 0 1 0 10" />
            </svg>
            <Clock>
              6:15 AM
              <br />
              5/14/2021
            </Clock>
          </Tray>
        </Taskbar>
      </Desktop>
    </>
  );
}
